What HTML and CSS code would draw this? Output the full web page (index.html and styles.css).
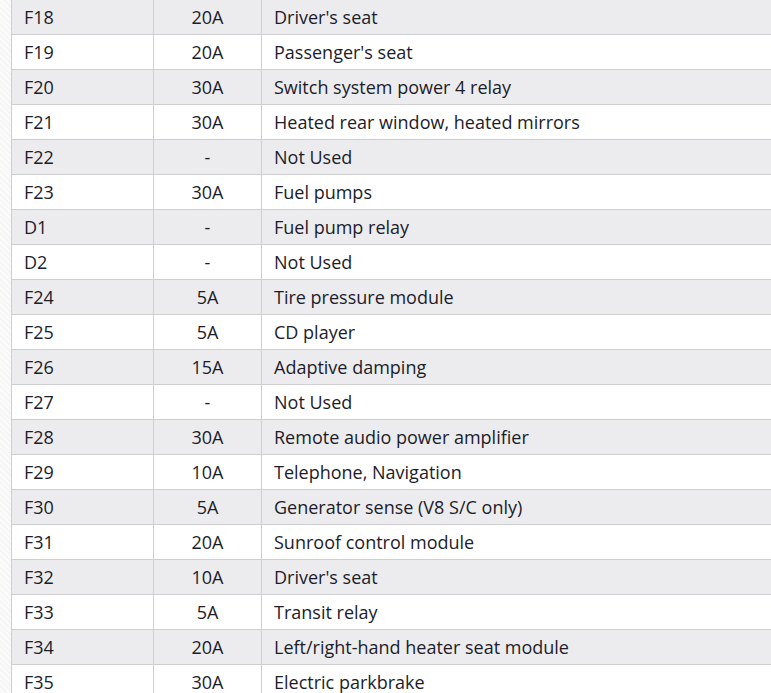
FILE: index.html
```html
<!DOCTYPE html>
<html>
<head>
<meta charset="utf-8">
<link rel="stylesheet" href="styles.css">
</head>
<body>
<div class="page">
  <div class="strip"></div>
  <div class="wrap">
    <table class="fuses">
      <colgroup><col class="c1"><col class="c2"><col class="c3"></colgroup>
      <tbody>
        <tr><td>F18</td><td class="amp">20A</td><td>Driver's seat</td></tr>
        <tr><td>F19</td><td class="amp">20A</td><td>Passenger's seat</td></tr>
        <tr><td>F20</td><td class="amp">30A</td><td>Switch system power 4 relay</td></tr>
        <tr><td>F21</td><td class="amp">30A</td><td>Heated rear window, heated mirrors</td></tr>
        <tr><td>F22</td><td class="amp">-</td><td>Not Used</td></tr>
        <tr><td>F23</td><td class="amp">30A</td><td>Fuel pumps</td></tr>
        <tr><td>D1</td><td class="amp">-</td><td>Fuel pump relay</td></tr>
        <tr><td>D2</td><td class="amp">-</td><td>Not Used</td></tr>
        <tr><td>F24</td><td class="amp">5A</td><td>Tire pressure module</td></tr>
        <tr><td>F25</td><td class="amp">5A</td><td>CD player</td></tr>
        <tr><td>F26</td><td class="amp">15A</td><td>Adaptive damping</td></tr>
        <tr><td>F27</td><td class="amp">-</td><td>Not Used</td></tr>
        <tr><td>F28</td><td class="amp">30A</td><td>Remote audio power amplifier</td></tr>
        <tr><td>F29</td><td class="amp">10A</td><td>Telephone, Navigation</td></tr>
        <tr><td>F30</td><td class="amp">5A</td><td>Generator sense (V8 S/C only)</td></tr>
        <tr><td>F31</td><td class="amp">20A</td><td>Sunroof control module</td></tr>
        <tr><td>F32</td><td class="amp">10A</td><td>Driver's seat</td></tr>
        <tr><td>F33</td><td class="amp">5A</td><td>Transit relay</td></tr>
        <tr><td>F34</td><td class="amp">20A</td><td>Left/right-hand heater seat module</td></tr>
        <tr><td>F35</td><td class="amp">30A</td><td>Electric parkbrake</td></tr>
      </tbody>
    </table>
  </div>
</div>
</body>
</html>
```
FILE: styles.css
```css
html, body {
  margin: 0;
  padding: 0;
  background: #ffffff;
  overflow: hidden;
}
.page {
  display: flex;
  width: 771px;
  height: 693px;
  overflow: hidden;
}
.strip {
  flex: 0 0 11px;
  background: repeating-linear-gradient(45deg, #f6f6f6 0 2px, #fbfbfb 2px 4px);
}
.wrap {
  flex: 1 1 auto;
  overflow: hidden;
  margin-top: -1px;
}
.fuses {
  border-collapse: collapse;
  width: 820px;
  table-layout: fixed;
  font-family: "Open Sans", "DejaVu Sans", sans-serif;
  font-size: 18px;
  color: #1c1c2a;
}
.c1 { width: 142px; }
.c2 { width: 108px; }
.fuses td {
  height: 34px;
  box-sizing: border-box;
  padding: 0 12px;
  border: 1px solid #cfcfd1;
  line-height: 34px;
  white-space: nowrap;
  vertical-align: middle;
}
.fuses tr:nth-child(odd) td {
  background: #ececee;
}
.fuses td.amp {
  text-align: center;
}
```
